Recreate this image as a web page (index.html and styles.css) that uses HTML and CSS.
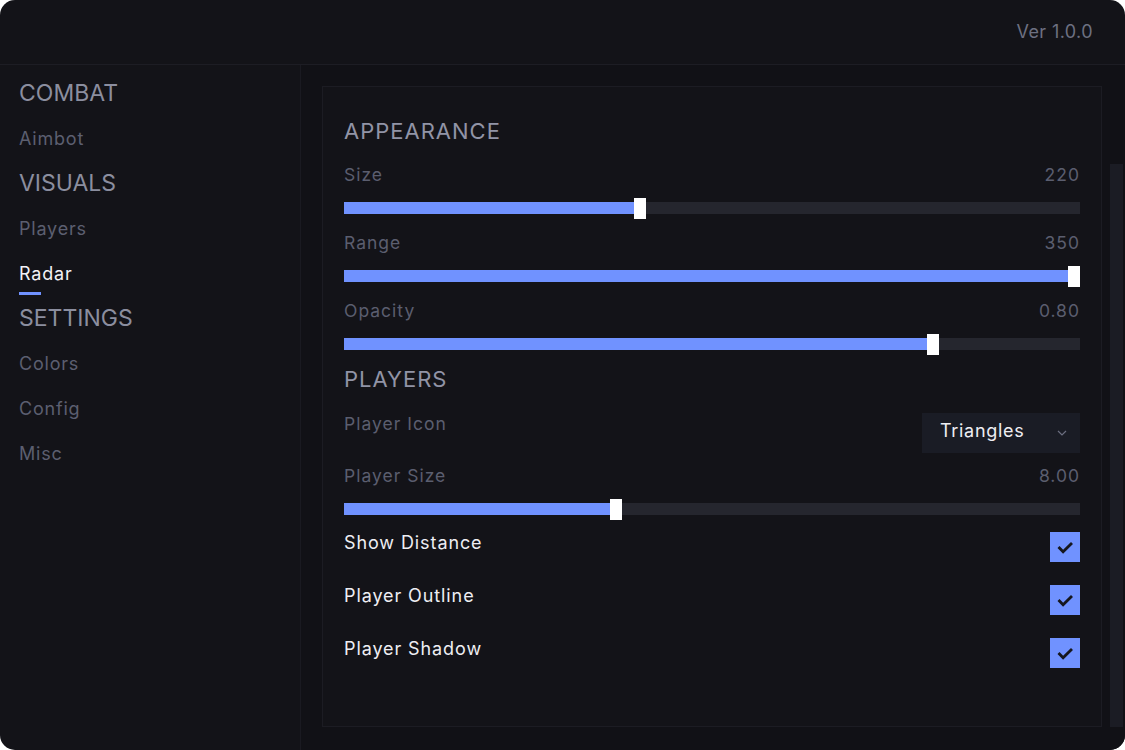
FILE: index.html
```html
<!DOCTYPE html>
<html lang="en">
<head>
    <meta charset="UTF-8">
    <meta name="viewport" content="width=device-width, initial-scale=1.0">
    <title>Radar</title>
    <link rel="stylesheet" href="styles.css">
</head>
<body>
    <div class="window">
        <header class="topbar">
            <span class="version">Ver 1.0.0</span>
        </header>
        <div class="window-body">
            <nav class="sidebar">
                <div class="nav-group">COMBAT</div>
                <div class="nav-item">Aimbot</div>
                <div class="nav-group">VISUALS</div>
                <div class="nav-item">Players</div>
                <div class="nav-item active">Radar</div>
                <div class="nav-group">SETTINGS</div>
                <div class="nav-item">Colors</div>
                <div class="nav-item">Config</div>
                <div class="nav-item">Misc</div>
            </nav>
            <main class="content">
                <section class="panel">
                    <h2 class="section-title">APPEARANCE</h2>

                    <div class="slider first">
                        <div class="slider-head"><span>Size</span><span>220</span></div>
                        <div class="track"><div class="fill" style="width: 40%"></div><div class="thumb" style="left: calc((100% - 12px) * 0.4)"></div></div>
                    </div>
                    <div class="slider">
                        <div class="slider-head"><span>Range</span><span>350</span></div>
                        <div class="track"><div class="fill" style="width: 100%"></div><div class="thumb" style="left: calc(100% - 12px)"></div></div>
                    </div>
                    <div class="slider">
                        <div class="slider-head"><span>Opacity</span><span>0.80</span></div>
                        <div class="track"><div class="fill" style="width: 80%"></div><div class="thumb" style="left: calc((100% - 12px) * 0.805)"></div></div>
                    </div>

                    <h2 class="section-title players">PLAYERS</h2>

                    <div class="select-row">
                        <span class="label">Player Icon</span>
                        <div class="select">
                            <span>Triangles</span>
                            <svg width="10" height="6" viewBox="0 0 10 6"><path d="M1 1l4 4 4-4" fill="none" stroke="#6b6e80" stroke-width="1.2"/></svg>
                        </div>
                    </div>

                    <div class="slider after-select">
                        <div class="slider-head"><span>Player Size</span><span>8.00</span></div>
                        <div class="track"><div class="fill" style="width: 37%"></div><div class="thumb" style="left: calc((100% - 12px) * 0.367)"></div></div>
                    </div>

                    <div class="check-row first-check">
                        <span>Show Distance</span>
                        <div class="checkbox"><svg width="30" height="30" viewBox="0 0 30 30"><path d="M8.5 15l4.6 4.8 8.9-8.9" fill="none" stroke="#16171e" stroke-width="2.8"/></svg></div>
                    </div>
                    <div class="check-row">
                        <span>Player Outline</span>
                        <div class="checkbox"><svg width="30" height="30" viewBox="0 0 30 30"><path d="M8.5 15l4.6 4.8 8.9-8.9" fill="none" stroke="#16171e" stroke-width="2.8"/></svg></div>
                    </div>
                    <div class="check-row">
                        <span>Player Shadow</span>
                        <div class="checkbox"><svg width="30" height="30" viewBox="0 0 30 30"><path d="M8.5 15l4.6 4.8 8.9-8.9" fill="none" stroke="#16171e" stroke-width="2.8"/></svg></div>
                    </div>
                </section>
                <div class="scrollbar"><div class="scroll-thumb"></div></div>
            </main>
        </div>
    </div>
</body>
</html>
```

FILE: styles.css
```css
body {
    margin: 0;
    background: #ffffff;
    font-family: Inter, "Noto Sans", sans-serif;
}
.window {
    width: 1125px;
    height: 750px;
    background: #131318;
    border-radius: 15px;
    overflow: hidden;
    display: flex;
    flex-direction: column;
}
.topbar {
    height: 64px;
    border-bottom: 1px solid #1d1d24;
    display: flex;
    align-items: center;
    justify-content: flex-end;
    padding-right: 32px;
}
.version {
    color: #6d7081;
    font-size: 18px;
    letter-spacing: 0.4px;
    margin-top: -2px;
}
.window-body {
    flex: 1;
    display: flex;
    min-height: 0;
}
.sidebar {
    width: 301px;
    box-sizing: border-box;
    border-right: 1px solid #1a1a21;
    padding: 6px 0 0 19px;
    display: flex;
    flex-direction: column;
}
.nav-group,
.nav-item {
    height: 45px;
    line-height: 45px;
    position: relative;
    align-self: flex-start;
}
.nav-group {
    color: #8b8e9f;
    font-size: 23px;
    letter-spacing: 0;
}
.nav-item {
    color: #5c5f70;
    font-size: 18px;
    letter-spacing: 0.8px;
}
.nav-item.active {
    color: #f2f2f6;
}
.nav-item.active::after {
    content: "";
    position: absolute;
    left: 0;
    bottom: 1px;
    width: 22px;
    height: 3px;
    background: #7092ff;
}
.content {
    flex: 1;
    background: #111116;
    display: flex;
    gap: 8px;
    padding: 21px 2px 23px 21px;
}
.panel {
    flex: 1;
    background: #131318;
    border: 1px solid #1c1c23;
    padding: 29px 21px 0 21px;
    display: flex;
    flex-direction: column;
}
.scrollbar {
    width: 13px;
    display: flex;
    flex-direction: column;
    justify-content: flex-end;
}
.scroll-thumb {
    height: 563px;
    background: #1b1c24;
}
.section-title {
    margin: 0;
    font-weight: 400;
    font-size: 22px;
    line-height: 30px;
    color: #9194a6;
    letter-spacing: 1px;
}
.section-title.players {
    margin-top: 14px;
}
.slider {
    margin-top: 17px;
}
.slider.after-select {
    margin-top: 11px;
}
.slider-head {
    display: flex;
    justify-content: space-between;
    font-size: 17.5px;
    line-height: 24px;
    color: #5b5e6f;
    letter-spacing: 1px;
}
.track {
    position: relative;
    height: 12px;
    margin-top: 15px;
    background: #25262e;
}
.fill {
    height: 100%;
    background: #7092ff;
}
.thumb {
    position: absolute;
    top: -4px;
    width: 12px;
    height: 21px;
    background: #ffffff;
}
.select-row {
    margin-top: 19px;
    display: flex;
    justify-content: space-between;
    align-items: flex-start;
}
.label {
    font-size: 17.5px;
    line-height: 22px;
    color: #5b5e6f;
    letter-spacing: 1px;
}
.select {
    width: 158px;
    height: 40px;
    box-sizing: border-box;
    background: #1a1c25;
    padding: 0 13px 0 18px;
    display: flex;
    align-items: center;
    justify-content: space-between;
    color: #eeeef3;
    font-size: 18px;
    letter-spacing: 0.7px;
}
.select span {
    margin-top: -5px;
}
.check-row {
    margin-top: 23px;
    display: flex;
    justify-content: space-between;
    align-items: flex-start;
    color: #eeeef3;
    font-size: 18px;
    line-height: 22px;
    letter-spacing: 0.9px;
}
.check-row.first-check {
    margin-top: 17px;
}
.checkbox {
    width: 30px;
    height: 30px;
    background: #7092ff;
}
.checkbox svg {
    display: block;
}
```
